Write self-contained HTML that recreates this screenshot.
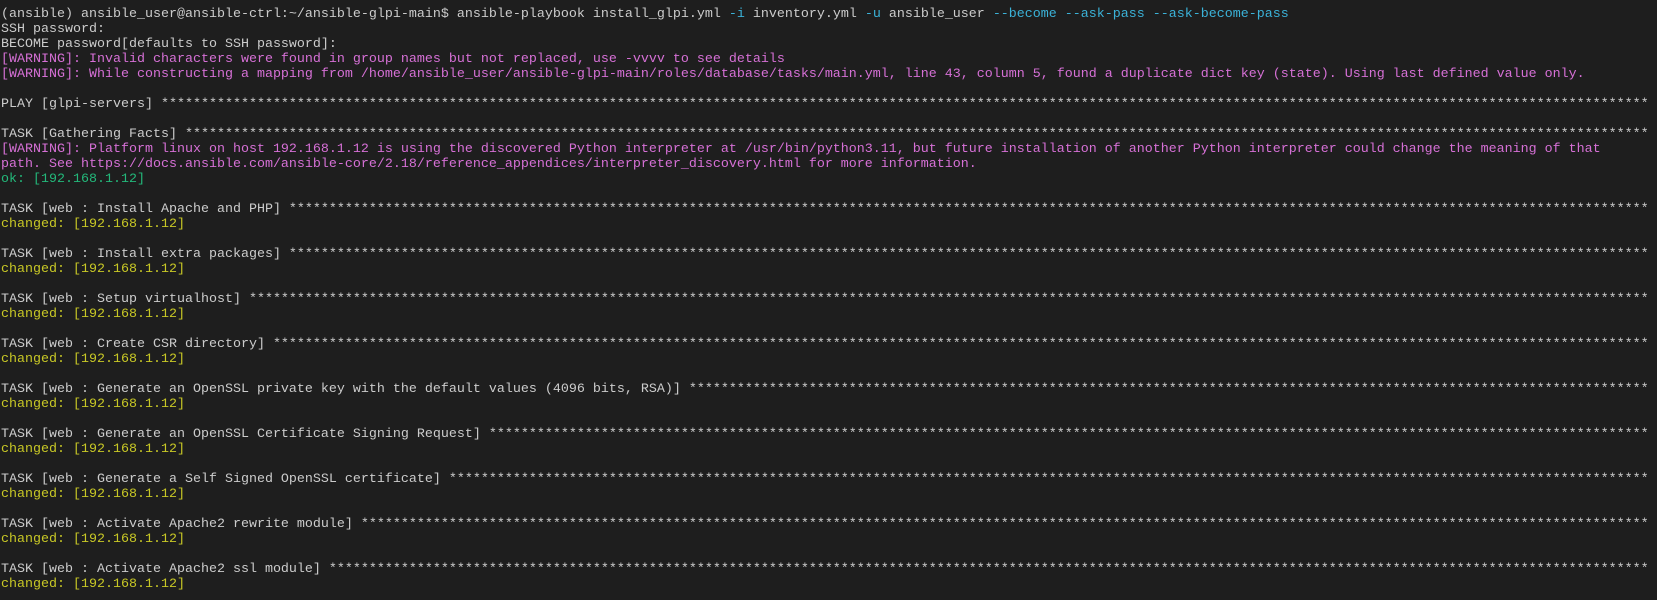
<!DOCTYPE html>
<html><head><meta charset="utf-8"><style>
html,body{margin:0;padding:0;background:#1e1e1e;width:1657px;height:600px;overflow:hidden}
pre{margin:0;padding:7px 0 0 1px;font-family:"Liberation Mono","DejaVu Sans Mono",monospace;font-size:13.33px;line-height:15px;color:#cccccc;white-space:pre}
.m{color:#d670d6}.g{color:#23b87a}.y{color:#c8c826}.c{color:#3bb2d8}
</style></head><body><pre>(ansible) ansible_user@ansible-ctrl:~/ansible-glpi-main$ ansible-playbook install_glpi.yml <span class="c">-i</span> inventory.yml <span class="c">-u</span> ansible_user <span class="c">--become --ask-pass --ask-become-pass</span>
SSH password:
BECOME password[defaults to SSH password]:
<span class="m">[WARNING]: Invalid characters were found in group names but not replaced, use -vvvv to see details</span>
<span class="m">[WARNING]: While constructing a mapping from /home/ansible_user/ansible-glpi-main/roles/database/tasks/main.yml, line 43, column 5, found a duplicate dict key (state). Using last defined value only.</span>

<span class="h">PLAY [glpi-servers]</span>

<span class="h">TASK [Gathering Facts]</span>
<span class="m">[WARNING]: Platform linux on host 192.168.1.12 is using the discovered Python interpreter at /usr/bin/python3.11, but future installation of another Python interpreter could change the meaning of that</span>
<span class="m">path. See https://docs.ansible.com/ansible-core/2.18/reference_appendices/interpreter_discovery.html for more information.</span>
<span class="g">ok: [192.168.1.12]</span>

<span class="h">TASK [web : Install Apache and PHP]</span>
<span class="y">changed: [192.168.1.12]</span>

<span class="h">TASK [web : Install extra packages]</span>
<span class="y">changed: [192.168.1.12]</span>

<span class="h">TASK [web : Setup virtualhost]</span>
<span class="y">changed: [192.168.1.12]</span>

<span class="h">TASK [web : Create CSR directory]</span>
<span class="y">changed: [192.168.1.12]</span>

<span class="h">TASK [web : Generate an OpenSSL private key with the default values (4096 bits, RSA)]</span>
<span class="y">changed: [192.168.1.12]</span>

<span class="h">TASK [web : Generate an OpenSSL Certificate Signing Request]</span>
<span class="y">changed: [192.168.1.12]</span>

<span class="h">TASK [web : Generate a Self Signed OpenSSL certificate]</span>
<span class="y">changed: [192.168.1.12]</span>

<span class="h">TASK [web : Activate Apache2 rewrite module]</span>
<span class="y">changed: [192.168.1.12]</span>

<span class="h">TASK [web : Activate Apache2 ssl module]</span>
<span class="y">changed: [192.168.1.12]</span>
</pre>
<script>
document.querySelectorAll('.h').forEach(function(e){var t=e.textContent;e.textContent=t+' '+'*'.repeat(Math.max(0,205-t.length));});
</script>
</body></html>
